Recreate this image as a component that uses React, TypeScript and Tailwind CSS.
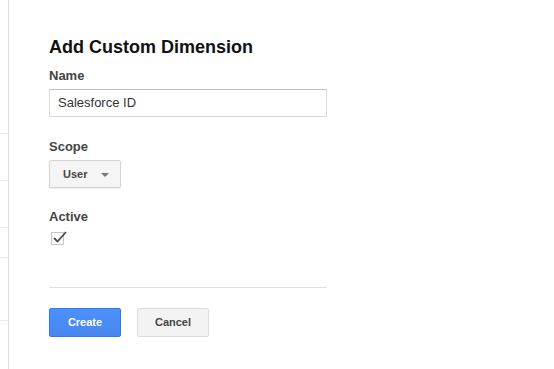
import React from "react";

export default function App() {
  return (
    <div className="flex w-[554px] h-[369px] bg-white overflow-hidden" style={{ fontFamily: '"Liberation Sans", Arial, sans-serif' }}>
      <div className="w-[9px] shrink-0 border-r border-[#dcdcdc] flex flex-col">
        <div className="h-[134px] border-b border-[#ebebeb]" />
        <div className="h-[47px] border-b border-[#ebebeb]" />
        <div className="h-[47px] border-b border-[#ebebeb]" />
        <div className="h-[30px] border-b border-[#ebebeb]" />
        <div className="h-[63px] border-b border-[#ebebeb]" />
      </div>
      <div className="pl-[40px] pt-[37px] flex flex-col w-[318px] box-content">
        <h1 className="text-[18px] leading-[20px] font-bold text-[#111]">Add Custom Dimension</h1>
        <div className="mt-[11px] text-[13px] leading-[16px] font-bold text-[#444]">Name</div>
        <div className="mt-[5px] h-[28px] w-[278px] border border-[#d9d9d9] border-t-[#c0c0c0] flex items-center px-[8px] text-[13px] text-[#333]">
          Salesforce ID
        </div>
        <div className="mt-[22px] text-[13px] leading-[16px] font-bold text-[#444]">Scope</div>
        <div className="mt-[5px] h-[28px] w-[72px] border border-[#d5d5d5] rounded-[2px] bg-[#f5f5f5] shadow-[0_1px_1px_rgba(0,0,0,0.08)] flex items-center pl-[13px] text-[11px] font-bold text-[#444]">
          <span>User</span>
          <span className="ml-[14px] w-0 h-0 border-l-[4px] border-r-[4px] border-t-[4px] border-l-transparent border-r-transparent border-t-[#777] mt-[2px]" />
        </div>
        <div className="mt-[21px] text-[13px] leading-[16px] font-bold text-[#444]">Active</div>
        <div className="relative mt-[7px] ml-[2px] w-[13px] h-[13px] border border-[#c6c6c6]">
          <svg width="16" height="16" viewBox="0 0 16 16" className="absolute left-[0px] top-[-4px]">
            <path d="M2 9 L5.5 12.5 L14 3" fill="none" stroke="#4a4a4a" strokeWidth="1.8" />
          </svg>
        </div>
        <div className="mt-[42px] w-[278px] border-t border-[#e0e0e0]" />
        <div className="mt-[20px] flex gap-[16px]">
          <button className="h-[29px] w-[72px] rounded-[2px] border border-[#3079ed] bg-gradient-to-b from-[#4d90fe] to-[#4787ed] text-white text-[11px] font-bold">Create</button>
          <button className="h-[29px] w-[72px] rounded-[2px] border border-[#dcdcdc] bg-[#f3f3f3] text-[#444] text-[11px] font-bold">Cancel</button>
        </div>
      </div>
    </div>
  );
}
